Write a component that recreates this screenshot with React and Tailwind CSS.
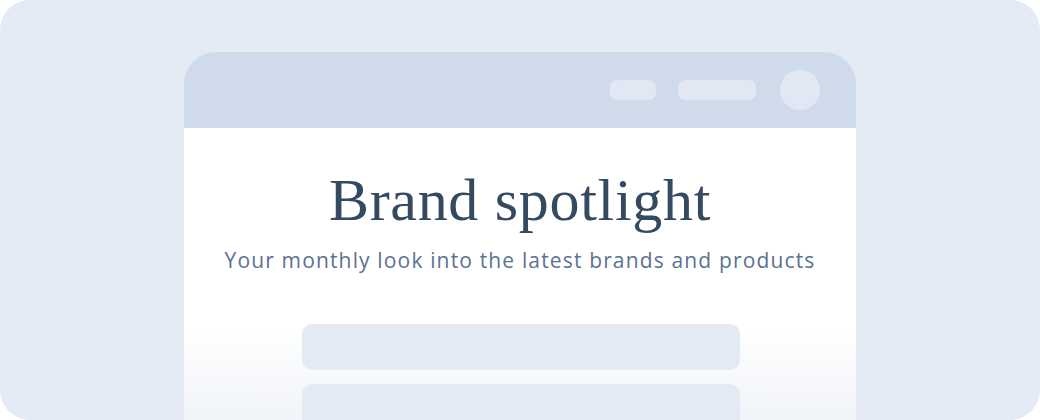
import React from 'react'

const Placeholder = () => (
    <div className="w-[438px] h-[46px] rounded-[10px] bg-[#e3eaf3]" />
)

const App = () => {
    return (
        <div className="w-[1040px] h-[420px] overflow-hidden rounded-[30px] bg-[#e5ebf4]">
            <div className="mx-auto mt-[52px] w-[672px] overflow-hidden rounded-t-[32px]">
                {/* top bar */}
                <div className="flex h-[76px] items-center justify-end gap-[22px] bg-[#cfdbeb] pr-[36px]">
                    <div className="h-[20px] w-[46px] rounded-[7px] bg-[#e1e8f3]" />
                    <div className="h-[20px] w-[78px] rounded-[7px] bg-[#e1e8f3]" />
                    <div className="ml-[2px] h-[40px] w-[40px] rounded-full bg-[#e1e8f3]" />
                </div>
                {/* body */}
                <div className="flex h-[292px] flex-col items-center bg-linear-to-b from-white from-[68%] to-[#f1f4f8] pt-[36px]">
                    <h1
                        className="text-[60px] leading-[72px] tracking-[0.7px] text-[#344a61]"
                        style={{ fontFamily: '"Liberation Serif", Georgia, serif' }}
                    >
                        Brand spotlight
                    </h1>
                    <p
                        className="mt-[9px] text-[21px] leading-[30px] tracking-[1.15px] text-[#5b7292]"
                        style={{ fontFamily: '"Open Sans", sans-serif' }}
                    >
                        Your monthly look into the latest brands and products
                    </p>
                    <div className="mt-[49px] flex flex-col gap-[14px] pl-[2px]">
                        <Placeholder />
                        <Placeholder />
                    </div>
                </div>
            </div>
        </div>
    )
}

export default App
